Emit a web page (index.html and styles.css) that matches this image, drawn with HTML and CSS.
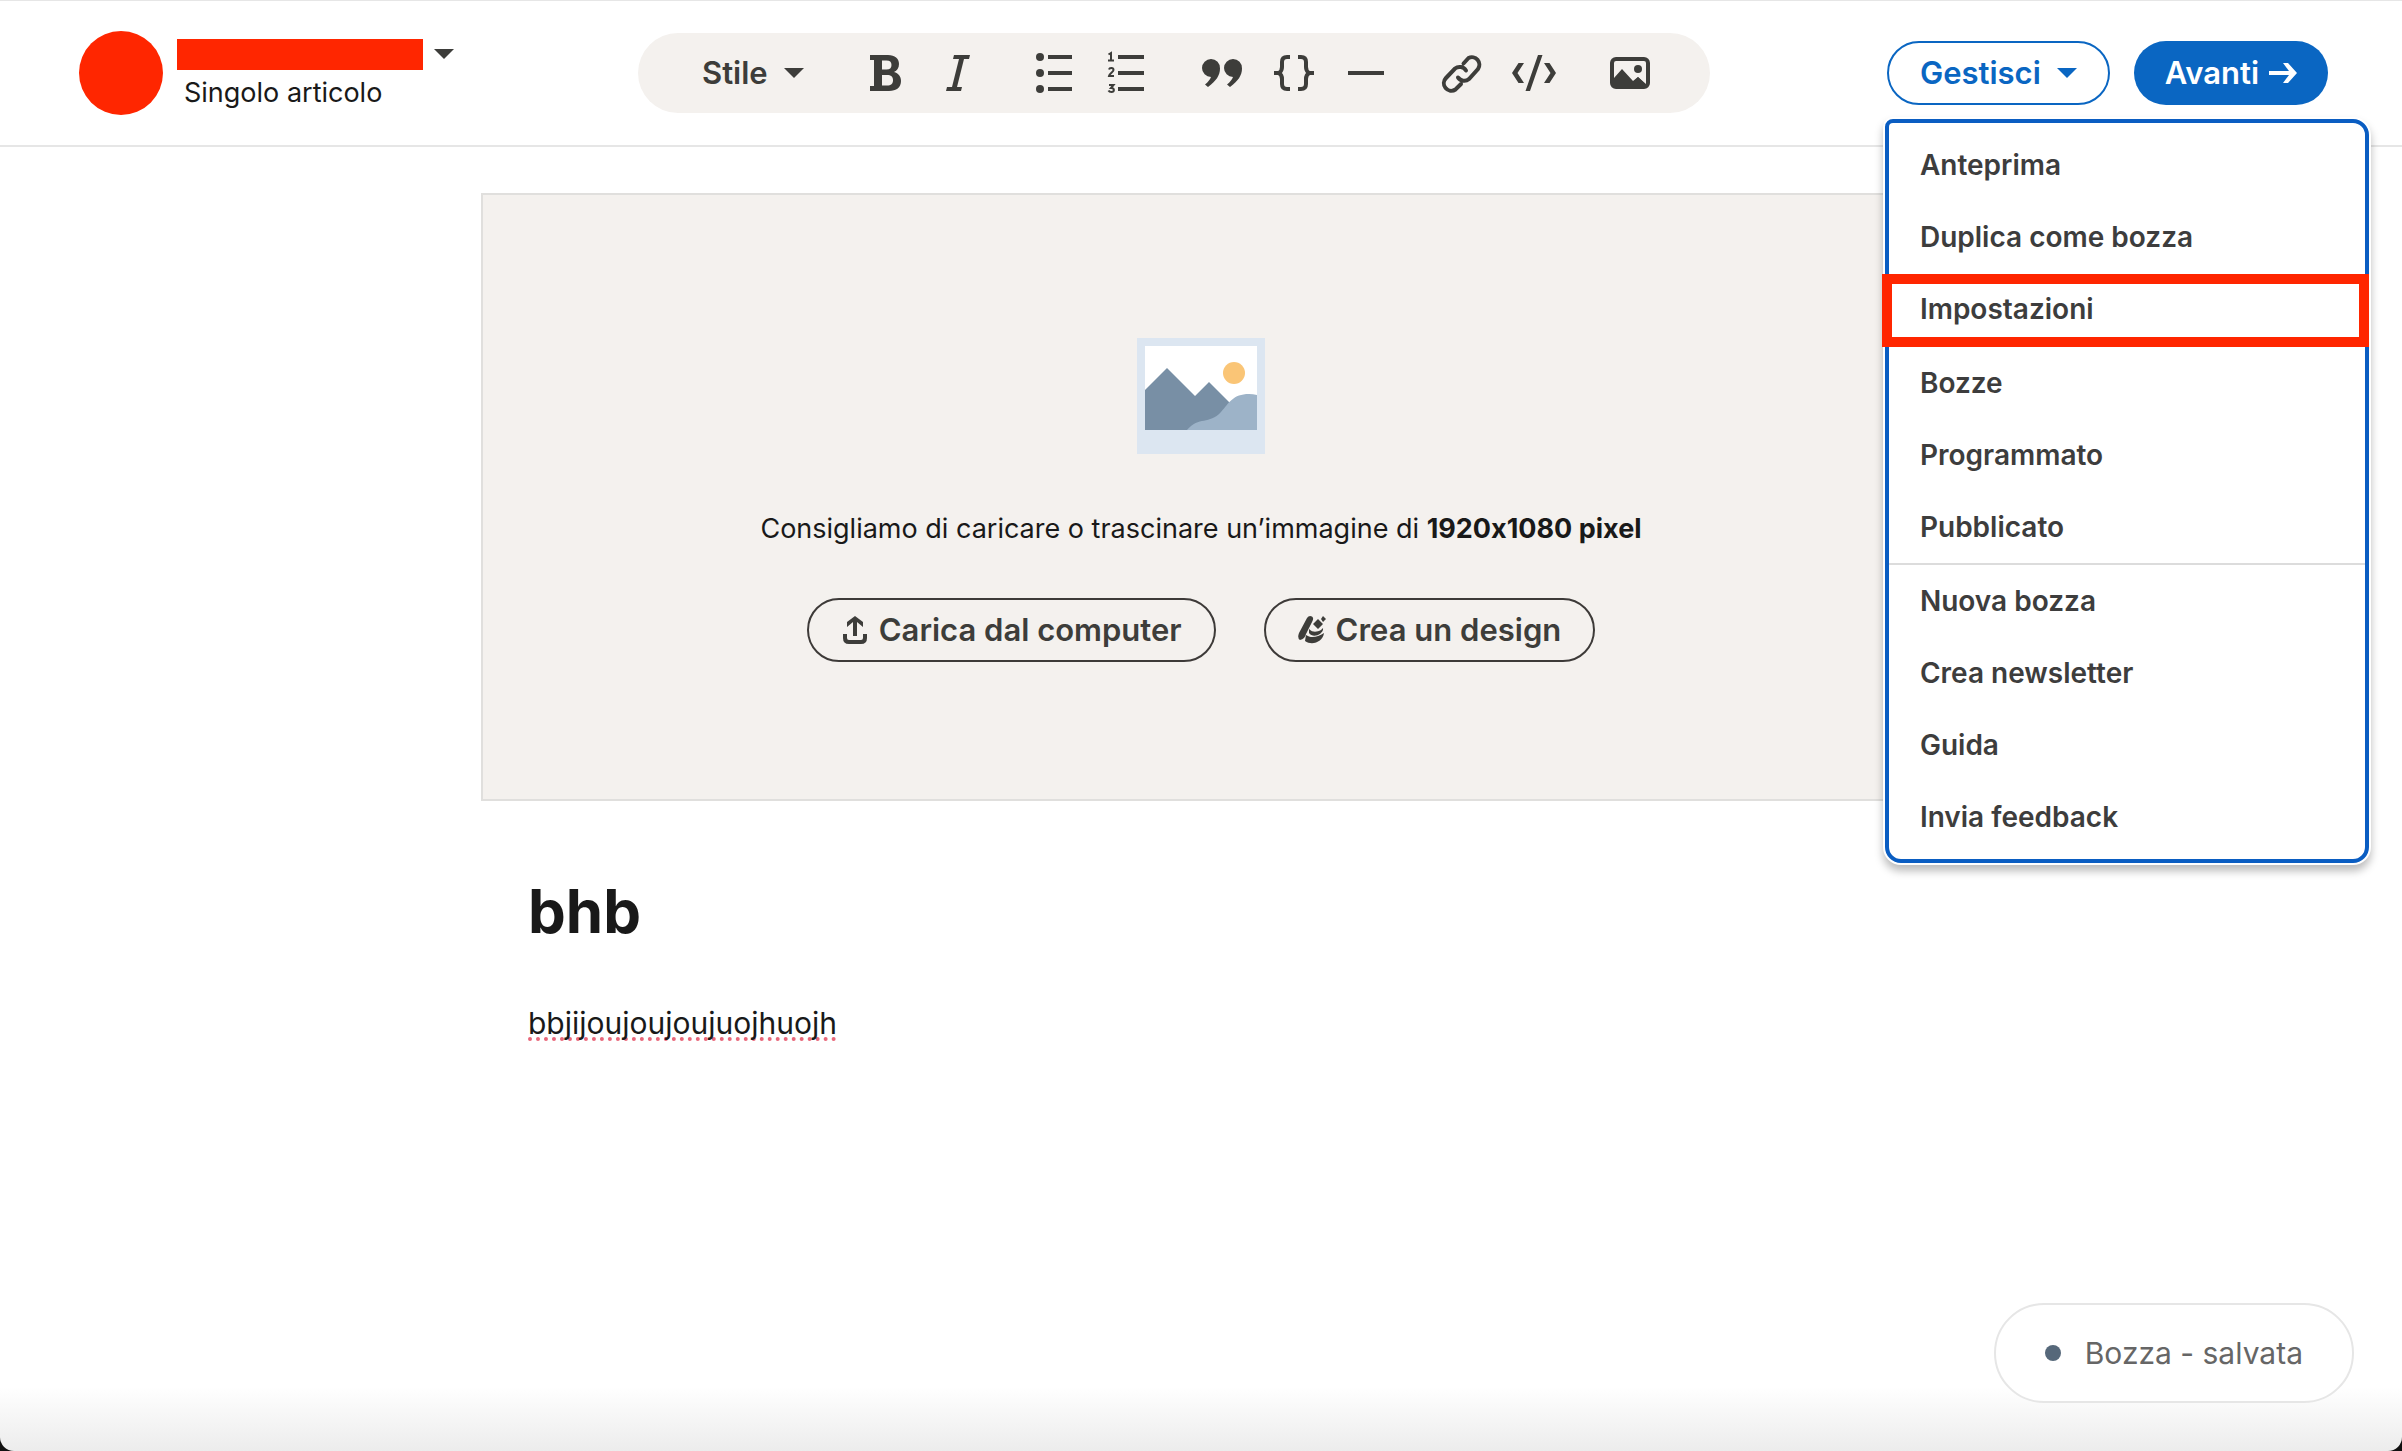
FILE: index.html
```html
<!DOCTYPE html>
<html lang="it">
<head>
<meta charset="utf-8">
<title>Bozza articolo</title>
<link rel="stylesheet" href="styles.css">
</head>
<body>
<header class="topbar">
  <div class="account">
    <span class="avatar"></span>
    <div class="account-info">
      <button class="account-switch" type="button" aria-label="Cambia autore">
        <span class="account-name"></span>
        <span class="caret"></span>
      </button>
      <span class="account-type">Singolo articolo</span>
    </div>
  </div>

  <div class="toolbar" role="toolbar" aria-label="Formattazione">
    <button class="style-button" type="button" aria-haspopup="listbox">Stile <span class="caret"></span></button>
    <div class="tool-group">
      <button class="tool" type="button" aria-label="Grassetto">
        <svg viewBox="0 0 48 48"><path fill-rule="evenodd" d="M8 6h18c7 0 11 3.500 11 9 0 4-2 6.500-5 8 4.500 1.200 7 4.500 7 9 0 6.500-4.500 10-12 10H8v-5h4V11H8zM20 11.500v9h4.500c3.300 0 5-1.700 5-4.600 0-3-1.700-4.400-5-4.400zM20 26v10.500h5c4 0 6-1.800 6-5.300S29 26 25 26z"/></svg>
      </button>
      <button class="tool" type="button" aria-label="Corsivo">
        <svg viewBox="0 0 48 48"><path d="M20 6h16l-1 4h-5l-7 28h5l-1 4H12l1-4h5l7-28h-6z"/></svg>
      </button>
    </div>
    <div class="tool-group">
      <button class="tool" type="button" aria-label="Elenco puntato">
        <svg viewBox="0 0 48 48"><circle cx="10" cy="8" r="4"/><circle cx="10" cy="24" r="4"/><circle cx="10" cy="40" r="4"/><path d="M18 6h24v4H18zM18 22h24v4H18zM18 38h24v4H18z"/></svg>
      </button>
      <button class="tool" type="button" aria-label="Elenco numerato">
        <svg viewBox="0 0 48 48"><path d="M16 6h26v4H16zM16 22h26v4H16zM16 38h26v4H16z"/><path class="line thin" d="M6.500 5.500L9 4v7M6 11.500h6M7 20.500C7.500 18.500 11.500 18.500 11.500 21c0 2-4 3.500-4.500 6h5M7 36h4.500L9 39c4 0 3.500 4 .5 4-1.500 0-2.500-.5-3-1.500"/></svg>
      </button>
    </div>
    <div class="tool-group">
      <button class="tool" type="button" aria-label="Citazione">
        <svg viewBox="0 0 48 48"><path d="M13 10a9 9 0 0 1 9 9.500c0 7-4 12.500-12 18.500l-3-2.500c3-2.500 5-5 6-7.500A9 9 0 0 1 13 10z"/><path d="M35 10a9 9 0 0 1 9 9.500c0 7-4 12.500-12 18.500l-3-2.500c3-2.500 5-5 6-7.500A9 9 0 0 1 35 10z"/></svg>
      </button>
      <button class="tool" type="button" aria-label="Blocco di codice">
        <svg viewBox="0 0 48 48"><path class="line" d="M20 8h-3q-5 0-5 5v5q0 4-3 6h-5 5q3 2 3 6v5q0 5 5 5h3M28 8h3q5 0 5 5v5q0 4 3 6h5-5q-3 2-3 6v5q0 5-5 5h-3"/></svg>
      </button>
      <button class="tool" type="button" aria-label="Separatore">
        <svg viewBox="0 0 48 48"><path d="M6 22h36v4H6z"/></svg>
      </button>
    </div>
    <div class="tool-group">
      <button class="tool" type="button" aria-label="Link">
        <svg viewBox="0 0 48 48"><path class="line round" d="M25.500 14.500l5-5.500a7.500 7.500 0 0 1 9.500 11l-9 10a7.500 7.500 0 0 1-11-1.500M28 21.500a7.500 7.500 0 0 0-11-2l-9 9.500a7.500 7.500 0 0 0 9.500 11.500l5.500-5.500"/></svg>
      </button>
      <button class="tool" type="button" aria-label="Incorpora">
        <svg viewBox="0 0 48 48"><path d="M28 6h4.500L20 42h-4.500zM8.500 14H14L7.500 24 14 34H8.500L2 24zM39.500 14H34l6.500 10L34 34h5.500L46 24z"/></svg>
      </button>
    </div>
    <div class="tool-group">
      <button class="tool" type="button" aria-label="Immagine">
        <svg viewBox="0 0 48 48"><path fill-rule="evenodd" d="M10 8h28a6 6 0 0 1 6 6v20a6 6 0 0 1-6 6H10a6 6 0 0 1-6-6V14a6 6 0 0 1 6-6zM10 12q-2 0-2 2v15l8-9 11 12 5-4 8 7V14q0-2-2-2z"/><path d="M24 36l8-8 8 8z"/><circle cx="32" cy="20" r="4"/></svg>
      </button>
    </div>
  </div>

  <div class="actions">
    <div class="manage">
      <button class="pill outline-blue" type="button" aria-haspopup="menu" aria-expanded="true">Gestisci <span class="caret"></span></button>
      <ul class="menu">
        <li><a href="#anteprima">Anteprima</a></li>
        <li><a href="#duplica">Duplica come bozza</a></li>
        <li class="marked"><a href="#impostazioni">Impostazioni</a></li>
        <li class="section"><a href="#bozze">Bozze</a></li>
        <li><a href="#programmato">Programmato</a></li>
        <li><a href="#pubblicato">Pubblicato</a></li>
        <li class="section"><a href="#nuova">Nuova bozza</a></li>
        <li><a href="#newsletter">Crea newsletter</a></li>
        <li><a href="#guida">Guida</a></li>
        <li><a href="#feedback">Invia feedback</a></li>
      </ul>
    </div>
    <button class="pill solid-blue" type="button">Avanti
      <svg class="arrow" viewBox="0 0 28 28"><path d="M0 12h20l-6-8h5l9 10-9 10h-5l6-8H0z"/></svg>
    </button>
  </div>
</header>

<main class="editor">
  <section class="cover">
    <svg class="illustration" viewBox="0 0 128 116" aria-hidden="true">
      <path fill="#dce6f1" d="M0 0h128v116H0z"/>
      <path fill="#fff" d="M8 8h112v84H8z"/>
      <path fill="#788fa5" d="M8 52l22-22 28 28 14-14 28 28v20H8z"/>
      <path fill="#9db3c8" d="M50 92c12-14 22-5 34-18 8-9 12-18 28-18q4 0 8 1v35z"/>
      <circle cx="97" cy="35" r="11" fill="#fac576"/>
    </svg>
    <p class="cover-hint">Consigliamo di caricare o trascinare un’immagine di <strong>1920x1080 pixel</strong></p>
    <div class="cover-actions">
      <button class="pill outline-dark" type="button">
        <svg class="pill-icon" viewBox="0 0 28 32"><path class="line" d="M4 20v4q0 4 4 4h12q4 0 4-4v-4"/><path d="M12 22V8l-6 5V8l8-6 8 6v5l-6-5v14z"/></svg>
        Carica dal computer
      </button>
      <button class="pill outline-dark" type="button">
        <svg class="pill-icon" viewBox="0 0 28 32"><path d="M9 4q2-3 5-1.500Q16 4 14.500 7L8 20q-1 5-6 6-3-2-1-7zM20 5l5 5-5 5-5-5zM25 2l3 3-3 3-2-3zM11 15c4 4 8 3 12 1l2-2c1 6-10 11-14 5zM8 21c4 3 11 3 18-2-1 9-12 13-19 8z"/></svg>
        Crea un design
      </button>
    </div>
  </section>
  <article class="content">
    <h1 class="title">bhb</h1>
    <p class="paragraph"><span class="misspelled">bbjijoujoujoujuojhuojh</span></p>
  </article>
</main>

<div class="status" role="status"><span class="status-dot"></span>Bozza - salvata</div>
</body>
</html>
```
FILE: styles.css
```css
* {
  box-sizing: border-box;
}

html {
  min-height: 100%;
  background: #111;
}

body {
  display: flex;
  flex-direction: column;
  min-height: 100vh;
  margin: 0;
  border-radius: 0 0 14px 14px;
  background: linear-gradient(to top, #ececec, #fff 64px);
  color: #191919;
  font-family: Inter, "Liberation Sans", sans-serif;
  font-size: 27px;
  font-feature-settings: "calt" 0;
  line-height: 36px;
}

button {
  margin: 0;
  padding: 0;
  border: 0;
  background: none;
  color: inherit;
  font: inherit;
  cursor: pointer;
}

svg {
  display: block;
  flex: none;
  fill: currentColor;
}

.line {
  fill: none;
  stroke: currentColor;
  stroke-width: 4;
}

.thin {
  stroke-width: 2;
}

.round {
  stroke-linecap: round;
}

.caret {
  border: 10px solid transparent;
  border-top-color: currentColor;
  border-bottom: 0;
}

/* Top bar */

.topbar {
  display: flex;
  align-items: center;
  justify-content: space-between;
  min-height: 147px;
  padding: 0 74px 0 79px;
  border-top: 1px solid #e6e6e6;
  border-bottom: 2px solid #e6e6e6;
}

.account {
  display: flex;
  align-items: center;
  gap: 14px;
  width: 382px;
}

.avatar {
  width: 84px;
  height: 84px;
  border-radius: 50%;
  background: #ff2600;
}

.account-info {
  padding-top: 3px;
}

.account-switch {
  display: flex;
  align-items: center;
  gap: 11px;
  color: #3d3d3a;
}

.account-name {
  width: 246px;
  height: 31px;
  background: #ff2600;
}

.account-type {
  display: block;
  margin: 5px 0 0 7px;
}

.toolbar {
  display: flex;
  align-items: center;
  gap: 24px;
  height: 80px;
  padding: 0 44px 0 64px;
  border-radius: 40px;
  background: #f4f1ee;
  color: #3d3d3a;
}

.style-button {
  display: flex;
  align-items: center;
  gap: 16px;
  width: 124px;
  font-size: 31px;
  font-weight: 600;
}

.tool-group {
  display: flex;
}

.tool {
  padding: 12px;
}

.tool svg {
  width: 48px;
  height: 48px;
}

.actions {
  display: flex;
  gap: 24px;
}

.pill {
  display: flex;
  align-items: center;
  height: 64px;
  padding: 0 32px;
  border-radius: 32px;
  font-size: 31px;
  font-weight: 600;
  white-space: nowrap;
}

.outline-blue {
  gap: 16px;
  padding: 0 31px;
  border: 2px solid #0a66c2;
  color: #0a66c2;
}

.solid-blue {
  gap: 10px;
  padding: 0 31px;
  background: #0a66c2;
  color: #fff;
}

.arrow {
  width: 28px;
  height: 28px;
}

.outline-dark {
  gap: 10px;
  border: 2px solid #3d3a38;
  color: #3d3d3a;
}

.pill-icon {
  width: 28px;
  height: 32px;
}

/* Manage menu */

.manage {
  position: relative;
}

.menu {
  position: absolute;
  top: 78px;
  left: -2px;
  z-index: 1;
  width: 484px;
  margin: 0;
  padding: 6px 0;
  border: 4px solid #0a5dc2;
  border-radius: 8px 16px 16px 16px;
  background: #fff;
  box-shadow: 0 0 0 2px #fff, 0 6px 8px 2px #0004;
  list-style: none;
}

.menu a {
  display: block;
  padding: 18px 31px;
  color: #3d3d3d;
  font-size: 28px;
  font-weight: 600;
  text-decoration: none;
}

.section {
  border-top: 2px solid #dcdcdc;
}

.marked {
  position: relative;
}

.marked::after {
  content: "";
  position: absolute;
  inset: 1px -4px -2px -7px;
  border: 10px solid #ff2600;
}

/* Editor */

.editor {
  width: 1440px;
  max-width: 100%;
  margin: 46px auto 0;
}

.cover {
  display: flex;
  flex-direction: column;
  align-items: center;
  padding: 143px 0 137px;
  border: 2px solid #e0dfdd;
  background: #f4f1ee;
}

.illustration {
  width: 128px;
  height: 116px;
}

.cover-hint {
  margin: 57px 0 51px;
}

.cover-actions {
  display: flex;
  gap: 48px;
}

.content {
  padding: 70px 47px;
}

.title {
  margin: 0 0 50px;
  font-size: 60px;
  line-height: 80px;
}

.paragraph {
  margin: 0;
  font-size: 30px;
  line-height: 44px;
}

.misspelled {
  text-decoration: underline dotted #e8677a 4px;
  text-decoration-skip-ink: none;
  text-underline-offset: 3px;
}

/* Save status */

.status {
  position: fixed;
  right: 48px;
  bottom: 48px;
  display: flex;
  align-items: center;
  gap: 24px;
  height: 100px;
  padding: 0 49px;
  border: 2px solid #e6e6e6;
  border-radius: 50px;
  background: #fff;
  color: #666;
  font-size: 30px;
}

.status-dot {
  width: 16px;
  height: 16px;
  border-radius: 50%;
  background: #56687a;
}
```
